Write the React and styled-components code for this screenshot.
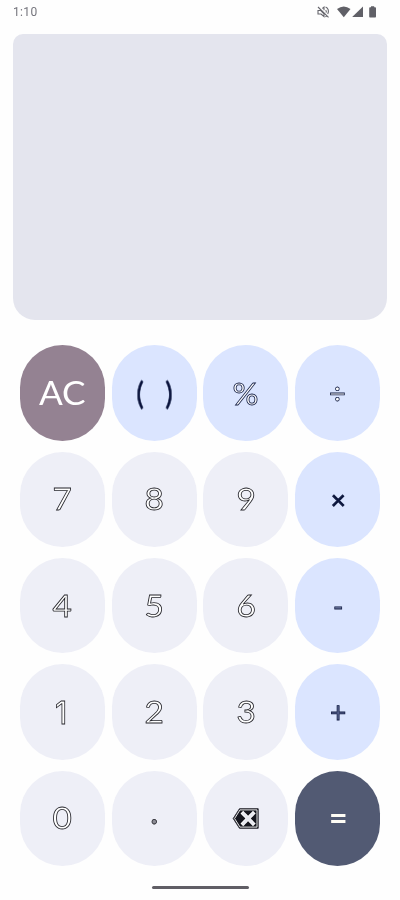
import React from 'react';
import styled, { createGlobalStyle } from 'styled-components';

const GlobalStyle = createGlobalStyle`
  * { box-sizing: border-box; }
  body { margin: 0; background: #fefefe; font-family: Inter, sans-serif; }
`;

const Screen = styled.main`
  width: 400px;
  height: 900px;
  overflow: hidden;
  display: flex;
  flex-direction: column;
  background: #fefefe;
`;

const StatusBar = styled.header`
  height: 34px;
  flex: none;
  padding: 5px 21px 0 13px;
  display: flex;
  justify-content: space-between;
  align-items: flex-start;
`;

const Clock = styled.time`
  font: 400 12px/15px Roboto, sans-serif;
  letter-spacing: 0.35px;
  color: #74747c;
  will-change: transform;
`;

const StatusIcons = styled.svg`
  width: 62px;
  height: 16px;
`;

const Display = styled.section`
  height: 286.3px;
  flex: none;
  margin: 0 12.7px;
  border-radius: 10px 10px 22px 22px;
  background: #e4e5ee;
`;

const Keypad = styled.section`
  flex: none;
  display: grid;
  grid-template-columns: repeat(4, 85px);
  grid-auto-rows: 95.5px;
  column-gap: 6.8px;
  row-gap: 10.8px;
  margin: 25.1px 0 0 19.9px;
`;

const tones = {
  clear: { bg: '#948292', fill: '#ffffff', edge: 'none' },
  operator: { bg: '#dbe5ff', fill: '#ffffff', edge: '#101a40' },
  digit: { bg: '#eeeff7', fill: '#ffffff', edge: '#25252b' },
  equals: { bg: '#525a73', fill: '#fffdf5', edge: 'none' },
};

const Key = styled.button`
  border: 0;
  padding: 0;
  border-radius: 43px;
  display: flex;
  align-items: center;
  justify-content: center;
  background: ${({ $tone }) => tones[$tone].bg};
`;

const Label = styled.span`
  font-family: ${({ $font }) => $font || 'Lato'}, sans-serif;
  font-weight: ${({ $weight }) => $weight || 400};
  font-size: ${({ $size }) => $size || 31}px;
  line-height: 40px;
  white-space: pre;
  color: ${({ $tone, $fill }) => $fill || tones[$tone].fill};
  -webkit-text-stroke: ${({ $tone, $stroke }) =>
    tones[$tone].edge === 'none' ? '0' : `${$stroke || 0.8}px ${tones[$tone].edge}`};
  transform: translate(${({ $x }) => $x || 0}px, ${({ $y }) => $y || 0}px)
    scaleX(${({ $stretch }) => $stretch || 1});
  will-change: transform;
`;

const DeleteIcon = styled.svg`
  width: 28px;
  height: 22px;
  transform: translateY(0.5px);
`;

const HomeBar = styled.footer`
  width: 97px;
  height: 3px;
  flex: none;
  margin: 20.3px 0 0 151.7px;
  border-radius: 2px;
  background: #605e65;
`;

const digit = (text, options) => ({
  text, tone: 'digit', size: 31.5, stretch: 1.06, y: -1, ...options,
});

const keys = [
  { text: 'AC', tone: 'clear', size: 32, stretch: 1.1 },
  { text: '(   )', tone: 'operator', size: 30, fill: '#07103a', stroke: 0.6, stretch: 0.93, y: -0.5 },
  { text: '%', tone: 'operator', size: 31.5, stretch: 1.03, y: -0.5 },
  { text: '÷', tone: 'operator', size: 29, y: -0.5 },
  digit('7'),
  digit('8'),
  digit('9'),
  { text: '×', tone: 'operator', size: 25, fill: '#07103a', stroke: 1.1, y: -0.5 },
  digit('4'),
  digit('5'),
  digit('6'),
  { text: '-', tone: 'operator', size: 28, fill: '#7681a8' },
  digit('1', { font: 'Inter', size: 30.5, stretch: 1, x: -1, y: 0.5 }),
  digit('2'),
  digit('3'),
  { text: '+', tone: 'operator', size: 28, fill: '#5c6793', y: -0.5 },
  digit('0'),
  digit('.', { size: 36, stretch: 1, y: -8.5, fill: '#8b8b94' }),
  { text: 'delete', tone: 'digit' },
  { text: '=', tone: 'equals', size: 32, weight: 700, y: -0.5 },
];

function Delete() {
  return (
    <DeleteIcon viewBox="0 0 28 22" aria-label="delete">
      <path d="M1.2 11 L7.5 1.2 H26.2 V20.8 H7.5 Z" fill="#15161e" stroke="#33333b" strokeWidth="1" strokeLinejoin="round" />
      <path d="M2.6 11 L8 2.4 H25 V19.6 H8 Z" fill="none" stroke="#fff" strokeWidth=".9" strokeLinejoin="round" />
      <path d="M11.2 6 L21 16 M21 6 L11.2 16" stroke="#fff" strokeWidth="3.8" strokeLinecap="square" strokeDasharray="1.5 .4" />
      <path d="M11.2 6 L21 16 M21 6 L11.2 16" stroke="#e7e8f0" strokeWidth="2.4" strokeLinecap="round" />
    </DeleteIcon>
  );
}

export default function App() {
  return (
    <>
      <GlobalStyle />
      <Screen>
        <StatusBar>
          <Clock>1:10</Clock>
          <StatusIcons viewBox="0 0 62 16" fill="#606067">
            <g fill="none" stroke="#65656c" strokeWidth="1.1">
              <path d="M1 2 L11.5 12.3 M1 5.5 H3.8 L7 8.8 V11.5 L4 9 H1 Z M5.4 3.5 L7 2.2 V5.2 M8.7 5 Q9.7 6.2 9.1 7.6 M8.6 2 C11.4 3 12.2 6.5 10.7 9 M8.4 11.8 L9.5 11.2" />
            </g>
            <path d="M20 4 Q26.7-1.2 33.5 4 L26.8 12.2 Z" />
            <path d="M35.2 12.1 L46 1.4 V12.1 Z" />
            <path d="M54 1.2 H57.2 V2.3 H58.2 Q59 2.3 59 3.2 V11.6 Q59 12.6 58.2 12.6 H53 Q52.2 12.6 52.2 11.6 V3.2 Q52.2 2.3 53 2.3 H54 Z" />
          </StatusIcons>
        </StatusBar>
        <Display />
        <Keypad>
          {keys.map(({ text, tone, size, stretch, fill, weight, font, x, y, stroke }) => (
            <Key key={text} $tone={tone}>
              {text === 'delete' ? (
                <Delete />
              ) : (
                <Label $tone={tone} $size={size} $stretch={stretch} $fill={fill} $weight={weight} $font={font} $x={x} $y={y} $stroke={stroke}>
                  {text}
                </Label>
              )}
            </Key>
          ))}
        </Keypad>
        <HomeBar />
      </Screen>
    </>
  );
}
